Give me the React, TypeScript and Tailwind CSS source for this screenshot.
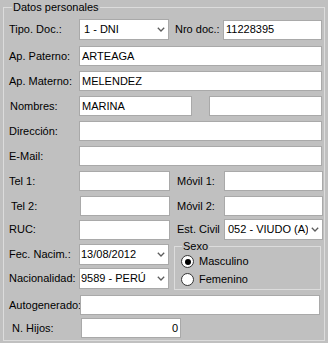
import type { ReactNode } from 'react';

function TextBox({ value = '', className = '', right = false }: { value?: string; className?: string; right?: boolean }) {
  return (
    <div
      className={`h-[20px] shrink-0 bg-white border border-[#a9a9a9] flex items-center px-[2px] text-[11px] leading-none text-black ${
        right ? 'justify-end' : ''
      } ${className}`}
    >
      {value}
    </div>
  );
}

function Chevron() {
  return (
    <svg width="8" height="5" viewBox="0 0 8 5" className="block">
      <polyline points="0.8,0.8 4,4 7.2,0.8" fill="none" stroke="#5c5c5c" strokeWidth="1.3" />
    </svg>
  );
}

function Combo({ value, className = '', textClass = 'pl-[4px]' }: { value: string; className?: string; textClass?: string }) {
  return (
    <div className={`h-[21px] shrink-0 bg-white border border-[#a9a9a9] flex items-center text-[11px] text-black ${className}`}>
      <span className={`flex-1 overflow-hidden whitespace-nowrap leading-[15px] ${textClass}`}>{value}</span>
      <span className="w-[14px] shrink-0 flex justify-center">
        <Chevron />
      </span>
    </div>
  );
}

function Label({ children, className = 'w-[70px]' }: { children: ReactNode; className?: string }) {
  return <span className={`shrink-0 text-[11px] leading-none text-black whitespace-nowrap ${className}`}>{children}</span>;
}

function Radio({ label, checked = false }: { label: string; checked?: boolean }) {
  return (
    <div className="h-[17px] flex items-center gap-[5px]">
      <span className="w-[13px] h-[13px] rounded-full bg-white border border-[#333333] flex items-center justify-center">
        {checked && <span className="w-[6px] h-[6px] rounded-full bg-black" />}
      </span>
      <span className="text-[11px] leading-none text-black">{label}</span>
    </div>
  );
}

export default function App() {
  return (
    <div className="w-[328px] h-[343px] bg-[#c0c0c0] pl-[3px] font-['Liberation_Sans',Arial,sans-serif] overflow-hidden">
      <fieldset className="w-[321px] h-[341px] border border-[#dcdcdc] pl-[5px] pr-[1px]">
        <legend className="ml-[3px] px-[1px] text-[11px] leading-[14px] text-black">Datos personales</legend>

        {/* Tipo doc + nro */}
        <div className="mt-[5px] h-[21px] flex items-center">
          <Label>Tipo. Doc.:</Label>
          <Combo value="1 - DNI" className="w-[90px]" />
          <Label className="ml-[6px] w-[48px]">Nro doc.:</Label>
          <TextBox value="11228395" className="w-[99px]" />
        </div>

        <div className="mt-[6px] flex items-center">
          <Label>Ap. Paterno:</Label>
          <TextBox value="ARTEAGA" className="w-[243px]" />
        </div>

        <div className="mt-[5px] flex items-center">
          <Label>Ap. Materno:</Label>
          <TextBox value="MELENDEZ" className="w-[243px]" />
        </div>

        <div className="mt-[5px] flex items-center">
          <Label className="w-[70px] pl-[1px]">Nombres:</Label>
          <TextBox value="MARINA" className="w-[113px]" />
          <TextBox className="ml-[17px] w-[113px]" />
        </div>

        <div className="mt-[5px] flex items-center">
          <Label>Dirección:</Label>
          <TextBox className="w-[243px]" />
        </div>

        <div className="mt-[5px] flex items-center">
          <Label>E-Mail:</Label>
          <TextBox className="w-[243px]" />
        </div>

        <div className="mt-[5px] flex items-center">
          <Label>Tel 1:</Label>
          <TextBox className="w-[91px]" />
          <Label className="ml-[7px] w-[47px]">Móvil 1:</Label>
          <TextBox className="w-[99px]" />
        </div>

        <div className="mt-[5px] flex items-center">
          <Label className="w-[71px] pl-[2px]">Tel 2:</Label>
          <TextBox className="w-[90px]" />
          <Label className="ml-[7px] w-[47px]">Móvil 2:</Label>
          <TextBox className="w-[99px]" />
        </div>

        <div className="mt-[3px] h-[21px] flex items-center">
          <Label>RUC:</Label>
          <TextBox className="w-[91px]" />
          <Label className="ml-[7px] w-[47px]">Est. Civil</Label>
          <Combo value="052 - VIUDO (A)" className="w-[99px]" textClass="pl-[3px]" />
        </div>

        {/* Fecha / nacionalidad + sexo */}
        <div className="flex items-start">
          <div className="w-[165px] pt-[4px] flex flex-col gap-[3px]">
            <div className="flex items-center">
              <Label>Fec. Nacim.:</Label>
              <Combo value="13/08/2012" className="w-[90px]" textClass="pl-[1px]" />
            </div>
            <div className="flex items-center">
              <Label>Nacionalidad:</Label>
              <Combo value="9589 - PERÚ" className="w-[90px]" textClass="pl-[1px]" />
            </div>
          </div>
          <fieldset className="w-[147px] h-[50px] border border-[#dcdcdc] pl-[6px]">
            <legend className="ml-[1px] px-[1px] text-[11px] leading-[12px] text-black">Sexo</legend>
            <div className="mt-[1px] flex flex-col gap-[1px]">
              <Radio label="Masculino" checked />
              <Radio label="Femenino" />
            </div>
          </fieldset>
        </div>

        <div className="mt-[5px] flex items-center">
          <Label className="w-[71px]">Autogenerado:</Label>
          <TextBox className="w-[240px]" />
        </div>

        <div className="mt-[3px] flex items-center">
          <Label className="w-[72px] pl-[3px]">N. Hijos:</Label>
          <TextBox value="0" right className="w-[100px]" />
        </div>
      </fieldset>
    </div>
  );
}
